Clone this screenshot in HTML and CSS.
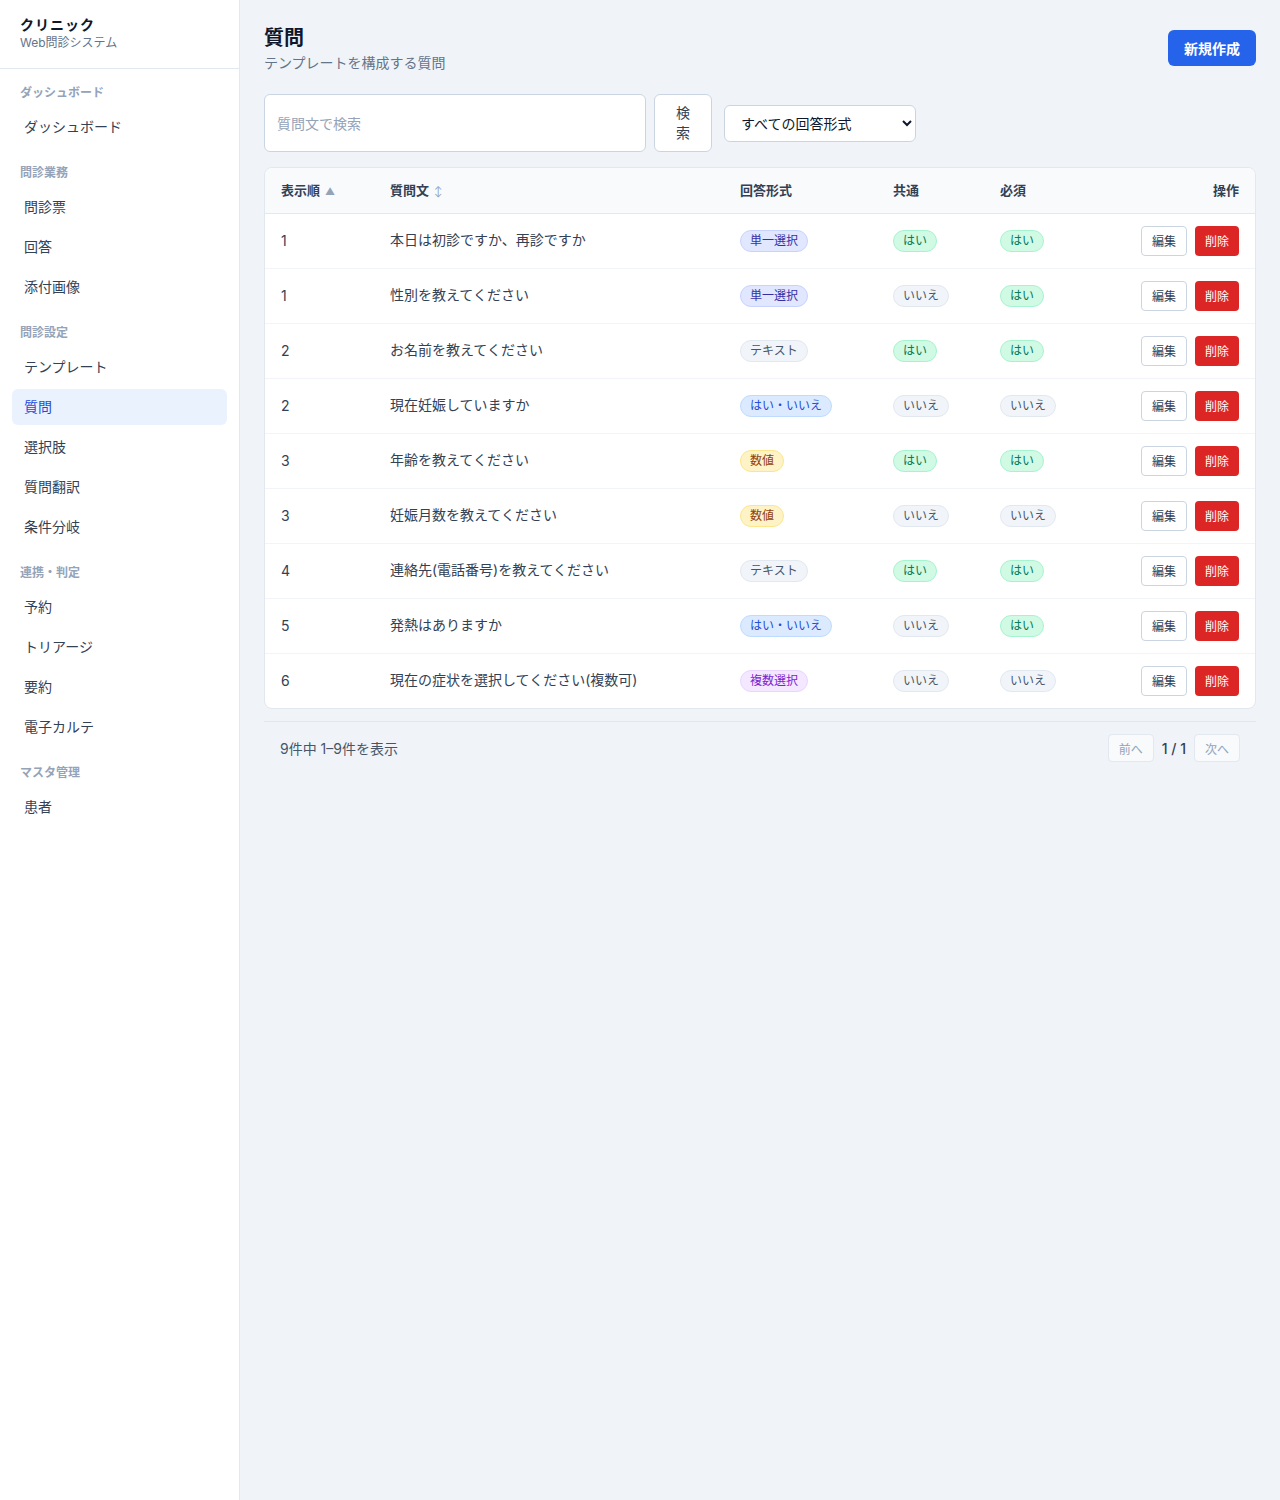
FILE: index.html
```html
<!DOCTYPE html>
<html lang="ja">
<head>
    <meta charset="UTF-8" />
    <meta name="viewport" content="width=device-width, initial-scale=1.0" />
    <title>質問 - クリニック</title>
    <link rel="stylesheet" href="styles.css">
</head>
<body>
<div class="layout">
    <aside class="sidebar">
        <div class="brand">
            <div class="brand-name">クリニック</div>
            <div class="brand-sub">Web問診システム</div>
        </div>
        <nav class="nav">
            <div class="nav-group">
                <div class="nav-label">ダッシュボード</div>
                <a class="nav-item" href="#">ダッシュボード</a>
            </div>
            <div class="nav-group">
                <div class="nav-label">問診業務</div>
                <a class="nav-item" href="#">問診票</a>
                <a class="nav-item" href="#">回答</a>
                <a class="nav-item" href="#">添付画像</a>
            </div>
            <div class="nav-group">
                <div class="nav-label">問診設定</div>
                <a class="nav-item" href="#">テンプレート</a>
                <a class="nav-item active" href="#">質問</a>
                <a class="nav-item" href="#">選択肢</a>
                <a class="nav-item" href="#">質問翻訳</a>
                <a class="nav-item" href="#">条件分岐</a>
            </div>
            <div class="nav-group">
                <div class="nav-label">連携・判定</div>
                <a class="nav-item" href="#">予約</a>
                <a class="nav-item" href="#">トリアージ</a>
                <a class="nav-item" href="#">要約</a>
                <a class="nav-item" href="#">電子カルテ</a>
            </div>
            <div class="nav-group">
                <div class="nav-label">マスタ管理</div>
                <a class="nav-item" href="#">患者</a>
            </div>
        </nav>
    </aside>

    <main class="main">
        <div class="page-header">
            <div>
                <h1>質問</h1>
                <p class="page-sub">テンプレートを構成する質問</p>
            </div>
            <button class="btn-primary">新規作成</button>
        </div>

        <div class="filters">
            <form class="search-form">
                <input type="text" class="search-input" placeholder="質問文で検索" />
                <button type="button" class="btn-search">検索</button>
            </form>
            <select class="type-select">
                <option>すべての回答形式</option>
                <option>単一選択</option>
                <option>複数選択</option>
                <option>テキスト</option>
                <option>数値</option>
                <option>はい・いいえ</option>
            </select>
        </div>

        <div class="card">
            <table class="questions">
                <colgroup>
                    <col class="c-order">
                    <col class="c-text">
                    <col class="c-type">
                    <col class="c-common">
                    <col class="c-required">
                    <col class="c-actions">
                </colgroup>
                <thead>
                    <tr>
                        <th>表示順 <span class="sort">▲</span></th>
                        <th>質問文 <span class="sort">↕</span></th>
                        <th>回答形式</th>
                        <th>共通</th>
                        <th>必須</th>
                        <th class="right">操作</th>
                    </tr>
                </thead>
                <tbody>
                    <tr>
                        <td>1</td>
                        <td class="q-text">本日は初診ですか、再診ですか</td>
                        <td><span class="badge indigo">単一選択</span></td>
                        <td><span class="badge green">はい</span></td>
                        <td><span class="badge green">はい</span></td>
                        <td class="right"><button class="btn-edit">編集</button><button class="btn-delete">削除</button></td>
                    </tr>
                    <tr>
                        <td>1</td>
                        <td class="q-text">性別を教えてください</td>
                        <td><span class="badge indigo">単一選択</span></td>
                        <td><span class="badge gray">いいえ</span></td>
                        <td><span class="badge green">はい</span></td>
                        <td class="right"><button class="btn-edit">編集</button><button class="btn-delete">削除</button></td>
                    </tr>
                    <tr>
                        <td>2</td>
                        <td class="q-text">お名前を教えてください</td>
                        <td><span class="badge gray">テキスト</span></td>
                        <td><span class="badge green">はい</span></td>
                        <td><span class="badge green">はい</span></td>
                        <td class="right"><button class="btn-edit">編集</button><button class="btn-delete">削除</button></td>
                    </tr>
                    <tr>
                        <td>2</td>
                        <td class="q-text">現在妊娠していますか</td>
                        <td><span class="badge blue">はい・いいえ</span></td>
                        <td><span class="badge gray">いいえ</span></td>
                        <td><span class="badge gray">いいえ</span></td>
                        <td class="right"><button class="btn-edit">編集</button><button class="btn-delete">削除</button></td>
                    </tr>
                    <tr>
                        <td>3</td>
                        <td class="q-text">年齢を教えてください</td>
                        <td><span class="badge amber">数値</span></td>
                        <td><span class="badge green">はい</span></td>
                        <td><span class="badge green">はい</span></td>
                        <td class="right"><button class="btn-edit">編集</button><button class="btn-delete">削除</button></td>
                    </tr>
                    <tr>
                        <td>3</td>
                        <td class="q-text">妊娠月数を教えてください</td>
                        <td><span class="badge amber">数値</span></td>
                        <td><span class="badge gray">いいえ</span></td>
                        <td><span class="badge gray">いいえ</span></td>
                        <td class="right"><button class="btn-edit">編集</button><button class="btn-delete">削除</button></td>
                    </tr>
                    <tr>
                        <td>4</td>
                        <td class="q-text">連絡先(電話番号)を教えてください</td>
                        <td><span class="badge gray">テキスト</span></td>
                        <td><span class="badge green">はい</span></td>
                        <td><span class="badge green">はい</span></td>
                        <td class="right"><button class="btn-edit">編集</button><button class="btn-delete">削除</button></td>
                    </tr>
                    <tr>
                        <td>5</td>
                        <td class="q-text">発熱はありますか</td>
                        <td><span class="badge blue">はい・いいえ</span></td>
                        <td><span class="badge gray">いいえ</span></td>
                        <td><span class="badge green">はい</span></td>
                        <td class="right"><button class="btn-edit">編集</button><button class="btn-delete">削除</button></td>
                    </tr>
                    <tr>
                        <td>6</td>
                        <td class="q-text">現在の症状を選択してください(複数可)</td>
                        <td><span class="badge purple">複数選択</span></td>
                        <td><span class="badge gray">いいえ</span></td>
                        <td><span class="badge gray">いいえ</span></td>
                        <td class="right"><button class="btn-edit">編集</button><button class="btn-delete">削除</button></td>
                    </tr>
                </tbody>
            </table>
        </div>

        <div class="pager">
            <span class="pager-info">9件中 1–9件を表示</span>
            <div class="pager-nav">
                <button class="btn-page" disabled>前へ</button>
                <span class="pager-count">1 / 1</span>
                <button class="btn-page" disabled>次へ</button>
            </div>
        </div>
    </main>
</div>
</body>
</html>
```

FILE: styles.css
```css
* {
    margin: 0;
    box-sizing: border-box;
}
body {
    font-family: "Inter", "Noto Sans CJK JP", sans-serif;
    background: #f0f4f8;
    color: #334155;
}
.layout {
    display: flex;
    min-height: 100vh;
}

/* sidebar */
.sidebar {
    width: 240px;
    flex-shrink: 0;
    background: #ffffff;
    border-right: 1px solid #e2e8f0;
}
.brand {
    padding: 16px 20px;
    border-bottom: 1px solid #e2e8f0;
    height: 69px;
}
.brand-name {
    font-size: 14px;
    line-height: 18px;
    font-weight: 700;
    color: #0f172a;
    letter-spacing: 1px;
}
.brand-sub {
    font-size: 12px;
    line-height: 18px;
    color: #64748b;
}
.nav {
    padding: 16px 12px;
}
.nav-group + .nav-group {
    margin-top: 20px;
}
.nav-label {
    padding: 0 8px;
    font-size: 12px;
    line-height: 16px;
    font-weight: 700;
    color: #94a3b8;
    margin-bottom: 8px;
}
.nav-item {
    display: flex;
    align-items: center;
    height: 36px;
    padding: 0 12px 3px;
    margin-bottom: 4px;
    border-radius: 6px;
    font-size: 14px;
    color: #334155;
    text-decoration: none;
}
.nav-item.active {
    background: #eaf2fe;
    color: #1d4ed8;
}

/* main */
.main {
    flex: 1;
    padding: 24px;
}
.page-header {
    display: flex;
    justify-content: space-between;
    align-items: center;
}
h1 {
    font-size: 20px;
    line-height: 28px;
    font-weight: 700;
    color: #0f172a;
}
.page-sub {
    margin-top: 1px;
    font-size: 14px;
    line-height: 20px;
    color: #64748b;
}
.btn-primary {
    height: 36px;
    padding: 0 16px;
    border: none;
    border-radius: 6px;
    background: #2563eb;
    color: #ffffff;
    font-family: inherit;
    font-size: 14px;
    font-weight: 700;
    margin-top: -2px;
}

.filters {
    display: flex;
    align-items: center;
    gap: 12px;
    margin-top: 21px;
}
.search-form {
    display: flex;
    gap: 8px;
}
.search-input {
    width: 382px;
    height: 58px;
    padding: 0 12px;
    border: 1px solid #cbd5e1;
    border-radius: 6px;
    font-family: inherit;
    font-size: 14px;
    background: #ffffff;
}
.search-input::placeholder {
    color: #94a3b8;
}
.btn-search {
    width: 58px;
    height: 58px;
    padding: 8px 20px;
    border: 1px solid #cbd5e1;
    border-radius: 6px;
    background: #ffffff;
    color: #334155;
    font-family: inherit;
    font-size: 14px;
    line-height: 20px;
}
.type-select {
    width: 192px;
    height: 37px;
    padding: 0 8px 0 12px;
    border: 1px solid #cbd5e1;
    border-radius: 6px;
    background: #ffffff;
    color: #0f172a;
    font-family: inherit;
    font-size: 14px;
}

/* table */
.card {
    margin-top: 15px;
    background: #ffffff;
    border: 1px solid #e2e8f0;
    border-radius: 8px;
    overflow: hidden;
}
.questions {
    width: 100%;
    border-collapse: collapse;
    table-layout: fixed;
}
.c-order { width: 109px; }
.c-text { width: 350px; }
.c-type { width: 153px; }
.c-common { width: 107px; }
.c-required { width: 138px; }
.c-actions { width: 133px; }
.questions th {
    height: 45px;
    padding: 0 16px 1px;
    text-align: left;
    font-size: 13px;
    font-weight: 700;
    color: #334155;
    background: #f8fafc;
    border-bottom: 1px solid #e2e8f0;
}
.sort {
    font-size: 10px;
    font-weight: 400;
    color: #94a3b8;
    margin-left: 2px;
}
.questions td {
    height: 55px;
    padding: 0 16px;
    font-size: 14px;
    color: #334155;
    border-bottom: 1px solid #f1f5f9;
    white-space: nowrap;
}
.questions td.q-text {
    padding-bottom: 3px;
}
.questions tbody tr:last-child td {
    border-bottom: none;
}
.questions .right {
    text-align: right;
}
.badge {
    display: inline-block;
    height: 22px;
    line-height: 20px;
    padding: 0 9px;
    border: 1px solid;
    border-radius: 999px;
    font-size: 12px;
}
.indigo { background: #e0e7ff; color: #3730a3; border-color: #c7d2fe; }
.green { background: #d1fae5; color: #047857; border-color: #a7f3d0; }
.gray { background: #f1f5f9; color: #475569; border-color: #e2e8f0; }
.blue { background: #dbeafe; color: #1d4ed8; border-color: #bfdbfe; }
.amber { background: #fef3c7; color: #92400e; border-color: #fde68a; }
.purple { background: #f3e8ff; color: #7e22ce; border-color: #e9d5ff; }

.btn-edit, .btn-delete {
    height: 30px;
    padding: 0 10px;
    border-radius: 4px;
    font-family: inherit;
    font-size: 12px;
    vertical-align: middle;
}
.btn-edit {
    border: 1px solid #cbd5e1;
    background: #ffffff;
    color: #334155;
    margin-right: 8px;
}
.btn-delete {
    border: none;
    background: #dc2626;
    color: #ffffff;
}

/* pager */
.pager {
    display: flex;
    justify-content: space-between;
    align-items: center;
    margin-top: 12px;
    padding: 12px 16px;
    border-top: 1px solid #e2e8f0;
}
.pager-info {
    font-size: 14px;
    color: #475569;
}
.pager-nav {
    display: flex;
    align-items: center;
    gap: 8px;
}
.btn-page {
    height: 28px;
    padding: 0 10px;
    border: 1px solid #e2e8f0;
    border-radius: 4px;
    background: #f8fafc;
    color: #94a3b8;
    font-family: inherit;
    font-size: 12px;
}
.pager-count {
    font-size: 14px;
    font-weight: 500;
    color: #334155;
}
```
